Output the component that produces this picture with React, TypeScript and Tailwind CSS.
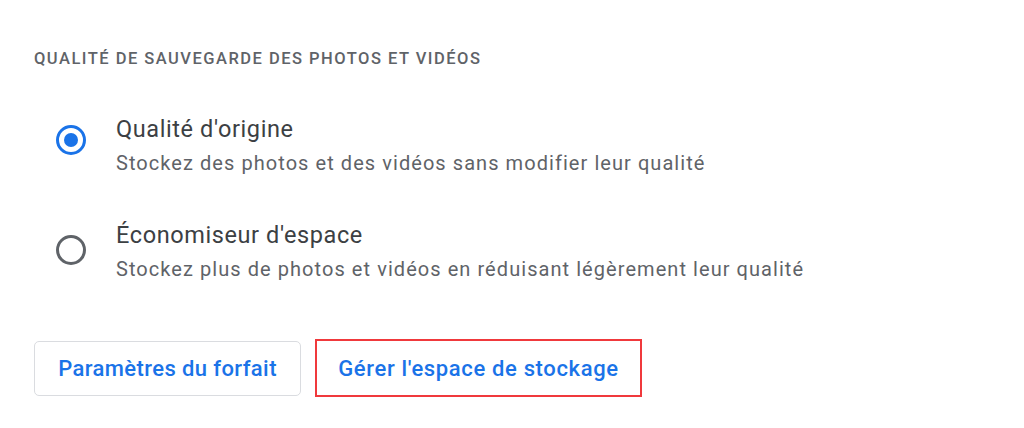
import React from "react";

function Radio({ checked }: { checked: boolean }) {
  return (
    <svg width="30" height="30" viewBox="0 0 30 30" className="shrink-0">
      <circle cx="15" cy="15" r="13.5" fill="none" stroke={checked ? "#1a73e8" : "#5f6368"} strokeWidth="3" />
      {checked && <circle cx="15" cy="15" r="7" fill="#1a73e8" />}
    </svg>
  );
}

function Option({ checked, title, desc, radioTop }: { checked: boolean; title: string; desc: string; radioTop: string }) {
  return (
    <div className="flex items-start">
      <div className={"w-[82px] pl-[22px] flex " + radioTop}>
        <Radio checked={checked} />
      </div>
      <div className="flex flex-col">
        <div className="text-[23.5px] leading-[32px] tracking-[0.6px] text-[#3c4043]">{title}</div>
        <div className="mt-[4px] text-[20px] leading-[28px] tracking-[1.06px] text-[#5f6368]">{desc}</div>
      </div>
    </div>
  );
}

export default function App() {
  return (
    <div className="w-[1024px] h-[428px] bg-white overflow-hidden" style={{ fontFamily: "Roboto, 'Noto Sans', sans-serif" }}>
      <div className="pl-[34px] pt-[49px]">
        <div className="text-[16.5px] leading-[20px] font-medium tracking-[0.09em] text-[#5f6368]">
          QUALITÉ DE SAUVEGARDE DES PHOTOS ET VIDÉOS
        </div>
        <div className="mt-[44px] flex flex-col gap-[42px]">
          <Option checked radioTop="pt-[12px]" title="Qualité d'origine" desc="Stockez des photos et des vidéos sans modifier leur qualité" />
          <Option checked={false} radioTop="pt-[16px]" title="Économiseur d'espace" desc="Stockez plus de photos et vidéos en réduisant légèrement leur qualité" />
        </div>
        <div className="mt-[56px] flex items-center gap-[14px]">
          <button className="h-[55px] w-[267px] rounded-[5px] border border-[#dadce0] text-[22px] font-medium tracking-[0.4px] text-[#1a73e8]">
            Paramètres du forfait
          </button>
          <button className="h-[58px] w-[327px] border-2 border-[#f0393c] text-[22px] font-medium tracking-[0.65px] text-[#1a73e8]">
            Gérer l'espace de stockage
          </button>
        </div>
      </div>
    </div>
  );
}
